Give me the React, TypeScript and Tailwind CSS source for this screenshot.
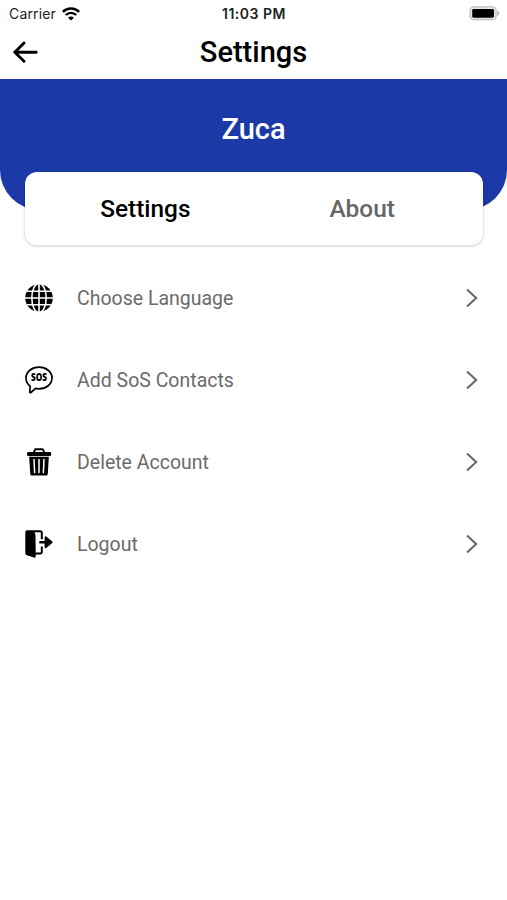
import React from "react";

function WifiIcon() {
  return (
    <svg width="18" height="14" viewBox="0 0 18 14" fill="none" stroke="#000">
      <path d="M0.9 4.8C5.4 0.4 12.6 0.4 17.1 4.8" strokeWidth="2.5" />
      <path d="M3.8 8C6.8 5.1 11.2 5.1 14.2 8" strokeWidth="2.4" />
      <path d="M9 13.6L6.1 10.7C7.7 9.2 10.3 9.2 11.9 10.7Z" fill="#000" stroke="none" />
    </svg>
  );
}

function BatteryIcon() {
  return (
    <svg width="31" height="15" viewBox="0 0 31 15">
      <rect x="1.1" y="0.9" width="26" height="12.8" rx="3.8" fill="#e8e8e8" stroke="#c0c0c0" strokeWidth="1.3" />
      <rect x="3.2" y="2.9" width="21.8" height="8.8" rx="1.4" fill="#000" />
      <path d="M28.2 4.6C31 5.8 31 8.8 28.2 10Z" fill="#b5b5b5" />
    </svg>
  );
}

function BackIcon() {
  return (
    <svg width="26" height="22" viewBox="0 0 26 22" fill="none" stroke="#000" strokeWidth="2.9" strokeLinecap="round" strokeLinejoin="round">
      <path d="M24.2 11.2H2.8M12 2L2.8 11.2L12 20.3" />
    </svg>
  );
}

function GlobeIcon() {
  return (
    <svg width="28" height="28" viewBox="0 0 28 28">
      <circle cx="14" cy="14" r="13.8" fill="#000" />
      <g fill="none" stroke="#fff" strokeWidth="1.6">
        <path d="M14 0V28M0 14H28M2 7.2H26M2 20.8H26" />
        <ellipse cx="14" cy="14" rx="7.2" ry="14.6" />
      </g>
    </svg>
  );
}

function SosIcon() {
  return (
    <svg width="28" height="28" viewBox="0 0 28 28">
      <path
        d="M5.2 20.2C2.4 18.2 1 15.3 1 12C1 5.8 6.8 1.1 14 1.1S27 5.8 27 12S21.2 22.8 14 22.8C12.8 22.8 11.6 22.7 10.5 22.4L5.9 26.5C5.2 27 4.6 26.6 4.7 25.8Z"
        fill="#fff"
        stroke="#000"
        strokeWidth="1.7"
        strokeLinejoin="round"
      />
      <text x="14" y="15.4" textAnchor="middle" textLength="16" lengthAdjust="spacingAndGlyphs" fontFamily="Open Sans, sans-serif" fontSize="9.6" fontWeight="800" fill="#000">
        SOS
      </text>
    </svg>
  );
}

function TrashIcon() {
  return (
    <svg width="28" height="28" viewBox="0 0 28 28">
      <path d="M8.8 4.2L10.2 1.3H17.8L19.2 4.2" fill="none" stroke="#000" strokeWidth="1.9" strokeLinejoin="round" />
      <rect x="2.1" y="4" width="24" height="4" rx="1.2" fill="#000" />
      <path d="M4.2 8.7H23.8L22.8 25.4C22.7 27 22 27.6 20.7 27.6H7.3C6 27.6 5.3 27 5.2 25.4Z" fill="#000" />
      <path d="M9 11.4L9.6 24.6M14 11.4V24.6M19 11.4L18.4 24.6" stroke="#fff" strokeWidth="1.5" fill="none" strokeLinecap="round" />
    </svg>
  );
}

function LogoutIcon() {
  return (
    <svg width="28" height="28" viewBox="0 0 28 28">
      <path d="M8 1.2H15.2Q16.8 1.2 16.8 2.8V9.2M16.8 16.6V21.8Q16.8 23.4 15.2 23.4H10" fill="none" stroke="#000" strokeWidth="2" />
      <path d="M2.4 0.3H8L9.8 2.2L10.6 26.4C10.6 27.4 9.9 27.9 9 27.6L1.8 25.3Q0.3 24.8 0.3 23.2V2.5Q0.3 0.3 2.4 0.3Z" fill="#000" />
      <path d="M1.5 0.5L9 3.2Q10.5 3.7 10.5 5.3V26.3L1.5 24Z" fill="#000" />
      <path d="M14.3 11.1H19.6V7.1Q20.2 5.8 21.2 6.5L27.3 11.6Q27.9 12.3 27.3 12.9L21.2 18Q20.2 18.6 19.6 17.7V13.4H14.3Z" fill="#000" />
    </svg>
  );
}

function Chevron() {
  return (
    <svg width="14" height="20" viewBox="0 0 14 20" fill="none" stroke="#666" strokeWidth="2">
      <path d="M2 1.6L11.2 10L2 18.4" />
    </svg>
  );
}

const rows = [
  { label: "Choose Language", Icon: GlobeIcon },
  { label: "Add SoS Contacts", Icon: SosIcon },
  { label: "Delete Account", Icon: TrashIcon },
  { label: "Logout", Icon: LogoutIcon },
];

export default function App() {
  return (
    <div className="h-[900px] w-full overflow-hidden bg-white font-['Roboto',sans-serif]">
      <div className="grid h-[27px] grid-cols-3 items-center pl-[9px] pr-[7px] font-['Inter',sans-serif] text-[14px] text-[#222]">
        <div className="flex items-center gap-[6px]">
          <span className="tracking-[0.15px]">Carrier</span>
          <WifiIcon />
        </div>
        <span className="pr-[1px] text-center text-[14px] font-semibold tracking-[0.5px]">11:03 PM</span>
        <div className="flex justify-end">
          <BatteryIcon />
        </div>
      </div>
      <header className="grid h-[52px] grid-cols-[1fr_auto_1fr] items-center px-3 pb-[2px]">
        <BackIcon />
        <h1 className="text-[29px] font-medium leading-[34px] text-black">Settings</h1>
      </header>
      <section className="h-[131px] rounded-b-[40px] bg-[#1c39a8] pt-[33px] text-center">
        <h2 className="text-[29px] font-medium leading-[35px] text-white">Zuca</h2>
      </section>
      <div className="relative ml-[25px] mr-[24.5px] -mt-[38px] grid h-[73px] grid-cols-2 items-center rounded-[12px] bg-white px-[12px] pt-px text-center text-[24.4px] font-medium shadow-[0_1px_2px_1px_rgba(0,0,0,0.13)]">
        <span className="text-black">Settings</span>
        <span className="text-[#666]">About</span>
      </div>
      <ul className="pt-[12.4px]">
        {rows.map(({ label, Icon }) => (
          <li key={label} className="flex h-[81.9px] items-center pl-[25px] pr-[28px]">
            <Icon />
            <span className="ml-6 flex-1 pt-[0.8px] text-[19.5px] text-[#6b6b6b]">{label}</span>
            <Chevron />
          </li>
        ))}
      </ul>
    </div>
  );
}
